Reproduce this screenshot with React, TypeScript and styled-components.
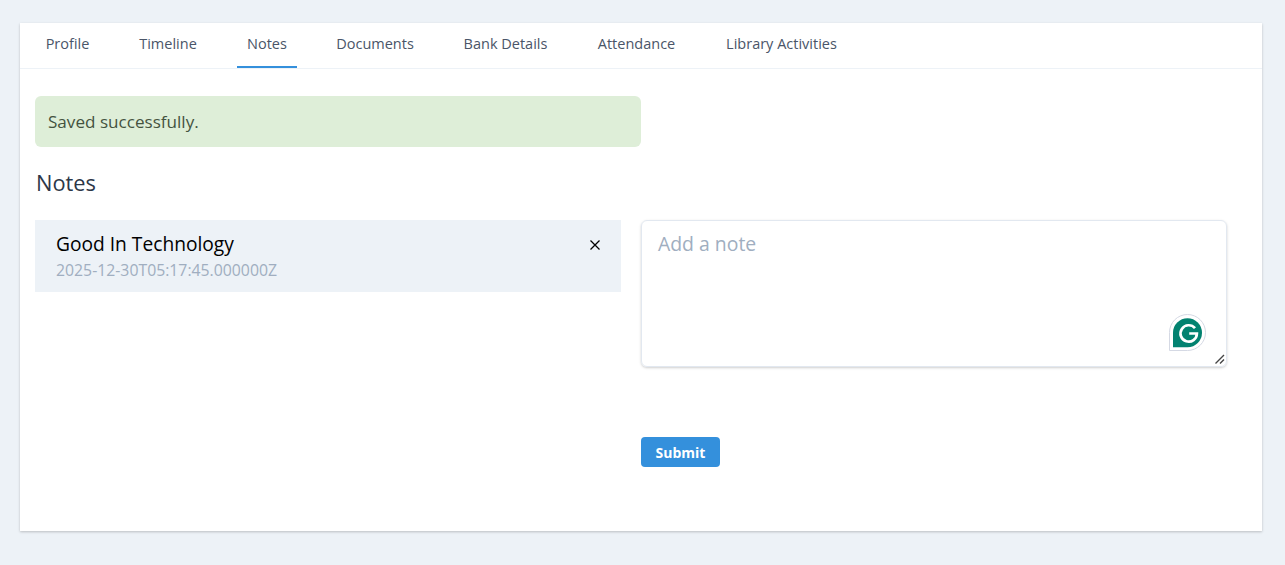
import React from "react";
import styled, { createGlobalStyle } from "styled-components";

const Global = createGlobalStyle`
  html, body { margin: 0; padding: 0; background: #edf2f7; }
  body { font-family: "Open Sans", "Noto Sans", sans-serif; }
  * { box-sizing: border-box; }
`;

const Page = styled.div`
  width: 1285px;
  height: 565px;
  padding: 23px 23px 34px 20px;
  overflow: hidden;
`;

const Card = styled.div`
  height: 508px;
  background: #fff;
  box-shadow: 0 1px 3px rgba(0, 0, 0, 0.12), 0 1px 2px rgba(0, 0, 0, 0.1);
`;

const Tabs = styled.nav`
  display: flex;
  gap: 30px;
  height: 46px;
  padding-left: 16px;
  border-bottom: 1px solid #edf2f7;
`;

const Tab = styled.div<{ $active?: boolean; $w: number }>`
  width: ${(p) => p.$w}px;
  height: 45px;
  display: flex;
  align-items: center;
  justify-content: center;
  padding-bottom: 3px;
  font-size: 14.5px;
  color: #4a5568;
  white-space: nowrap;
  border-bottom: 2px solid ${(p) => (p.$active ? "#3490dc" : "transparent")};
`;

const Body = styled.div`
  padding: 27px 15px 0;
`;

const Alert = styled.div`
  width: 606px;
  height: 51px;
  padding: 0 13px;
  display: flex;
  align-items: center;
  border-radius: 6px;
  background: #deeed8;
  color: #44533f;
  font-size: 17.1px;
`;

const Title = styled.h2`
  margin: 21px 0 0 1px;
  height: 29px;
  line-height: 29px;
  font-size: 21.8px;
  font-weight: 500;
  color: #2d3748;
`;

const Columns = styled.div`
  margin-top: 23px;
  display: grid;
  grid-template-columns: 586px 586px;
  column-gap: 20px;
`;

const NoteCard = styled.div`
  height: 72px;
  padding: 11px 21px 0 21px;
  background: #edf2f7;
  display: flex;
  justify-content: space-between;
`;

const NoteText = styled.div`
  font-size: 19.2px;
  line-height: 26px;
  color: #000;
`;

const NoteDate = styled.div`
  margin-top: 3px;
  font-size: 15.8px;
  line-height: 20px;
  color: #a0aec0;
`;

const Close = styled.svg`
  margin: 9px 0 0 0;
  width: 10px;
  height: 10px;
`;

const Form = styled.div`
  display: flex;
  flex-direction: column;
  align-items: flex-start;
`;

const NoteArea = styled.div`
  position: relative;
  width: 586px;
  height: 147px;
  padding: 10px 16px;
  border: 1px solid #e2e8f0;
  border-radius: 6px;
  box-shadow: 0 1px 3px rgba(0, 0, 0, 0.14), 0 1px 2px rgba(0, 0, 0, 0.06);
  font-size: 19.4px;
  line-height: 26px;
  color: #a0aec0;
`;

const Badge = styled.svg`
  position: absolute;
  right: 19px;
  bottom: 15px;
  width: 38px;
  height: 37px;
`;

const Grip = styled.svg`
  position: absolute;
  right: 1px;
  bottom: 1px;
  width: 11px;
  height: 11px;
`;

const Submit = styled.button`
  margin-top: 70px;
  width: 79px;
  height: 30px;
  padding: 0;
  border: 0;
  border-radius: 4px;
  background: #3490dc;
  color: #fff;
  font-family: inherit;
  font-size: 14px;
  font-weight: 700;
`;

const tabs: [string, number][] = [
  ["Profile", 63],
  ["Timeline", 78],
  ["Notes", 60],
  ["Documents", 96],
  ["Bank Details", 105],
  ["Attendance", 97],
  ["Library Activities", 133],
];

export default function App() {
  return (
    <Page>
      <Global />
      <Card>
        <Tabs>
          {tabs.map(([t, w]) => (
            <Tab key={t} $w={w} $active={t === "Notes"}>
              {t}
            </Tab>
          ))}
        </Tabs>
        <Body>
          <Alert>Saved successfully.</Alert>
          <Title>Notes</Title>
          <Columns>
            <NoteCard>
              <div>
                <NoteText>Good In Technology</NoteText>
                <NoteDate>2025-12-30T05:17:45.000000Z</NoteDate>
              </div>
              <Close viewBox="0 0 10 10">
                <path d="M0.5 0.5 9.5 9.5M9.5 0.5 0.5 9.5" stroke="#000" strokeWidth="1.3" fill="none" />
              </Close>
            </NoteCard>
            <Form>
              <NoteArea>
                Add a note
                <Badge viewBox="0 0 38 37">
                  <path d="M0.5 36.5V18.5a18 18 0 1 1 18 18Z" fill="#fff" stroke="#d5d9e4" strokeWidth="1" />
                  <path d="M4 33.2V18.7a14.5 14.5 0 1 1 14.5 14.5Z" fill="#028270" />
                  <path d="M26 14.2A8.2 8.2 0 1 0 27.9 19.5H20.2" fill="none" stroke="#fff" strokeWidth="2.7" />
                </Badge>
                <Grip viewBox="0 0 11 11">
                  <path d="M1.5 9.5 10 1M6 9.5 10 5.5" stroke="#444" strokeWidth="1.4" fill="none" />
                </Grip>
              </NoteArea>
              <Submit>Submit</Submit>
            </Form>
          </Columns>
        </Body>
      </Card>
    </Page>
  );
}
